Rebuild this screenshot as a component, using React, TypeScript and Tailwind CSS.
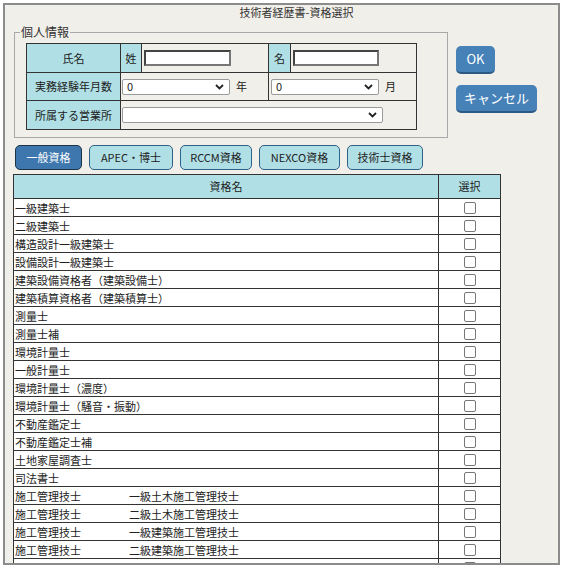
import React from "react";

const rows: [string, string?][] = [
  ["一級建築士"],
  ["二級建築士"],
  ["構造設計一級建築士"],
  ["設備設計一級建築士"],
  ["建築設備資格者（建築設備士）"],
  ["建築積算資格者（建築積算士）"],
  ["測量士"],
  ["測量士補"],
  ["環境計量士"],
  ["一般計量士"],
  ["環境計量士（濃度）"],
  ["環境計量士（騒音・振動）"],
  ["不動産鑑定士"],
  ["不動産鑑定士補"],
  ["土地家屋調査士"],
  ["司法書士"],
  ["施工管理技士", "一級土木施工管理技士"],
  ["施工管理技士", "二級土木施工管理技士"],
  ["施工管理技士", "一級建築施工管理技士"],
  ["施工管理技士", "二級建築施工管理技士"],
  ["施工管理技士", "一級造園施工管理技士"],
];

const tabs = [
  { label: "一般資格", w: "w-[67px]", active: true },
  { label: "APEC・博士", w: "w-[84px]" },
  { label: "RCCM資格", w: "w-[72px]" },
  { label: "NEXCO資格", w: "w-[81px]" },
  { label: "技術士資格", w: "w-[76px]" },
];

function Chevron() {
  return (
    <svg width="9" height="6" viewBox="0 0 9 6" className="shrink-0">
      <path d="M1 1 L4.5 4.5 L8 1" fill="none" stroke="#222" strokeWidth="1.8" />
    </svg>
  );
}

function FakeSelect({ value, w }: { value: string; w: string }) {
  return (
    <div className={`${w} h-[16px] bg-white border border-[#9a9a9a] rounded-[2px] flex items-center justify-between pl-[4px] pr-[5px] text-[11px] leading-none`}>
      <span>{value}</span>
      <Chevron />
    </div>
  );
}

function TextBox({ w }: { w: string }) {
  return <div className={`${w} h-[16px] bg-white border-2 border-[#444] border-b-[#777] border-r-[#777]`} />;
}

export default function App() {
  return (
    <div className="w-[562px] h-[568px] bg-white pt-[3px] pl-[3px] font-['Noto_Sans_CJK_JP',sans-serif] text-[#222]">
      <div className="w-[557px] h-[562px] border-2 border-[#8c8c8c] bg-[#f1efe9] overflow-hidden">
        {/* title */}
        <div className="h-[15px] text-[11px] leading-[15px] text-center pl-[30px] text-[#333]">技術者経歴書-資格選択</div>

        <div className="flex items-start mt-[4px]">
          <fieldset className="ml-[9px] w-[434px] border border-[#a8a8a8] pl-[11px] pt-[3px] pb-[7px]">
            <legend className="ml-[-6px] px-[1px] text-[12px] leading-[16px] text-[#333]">個人情報</legend>
            <table className="w-[391px] border-collapse border border-[#333] text-[11px]">
              <tbody>
                <tr className="h-[29px]">
                  <td className="w-[94px] border border-[#333] bg-[#b0e0e6] text-center">氏名</td>
                  <td className="w-[21px] border border-[#333] bg-[#b0e0e6] text-center">姓</td>
                  <td className="w-[127px] border border-[#333] pl-[2px]">
                    <TextBox w="w-[87px]" />
                  </td>
                  <td className="w-[22px] border border-[#333] bg-[#b0e0e6] text-center">名</td>
                  <td className="border border-[#333] pl-[2px]">
                    <TextBox w="w-[86px]" />
                  </td>
                </tr>
                <tr className="h-[28px]">
                  <td className="border border-[#333] bg-[#b0e0e6] text-center">実務経験年月数</td>
                  <td colSpan={2} className="border border-[#333] pl-[1px]">
                    <div className="flex items-center gap-[6px]">
                      <FakeSelect value="0" w="w-[108px]" />
                      <span>年</span>
                    </div>
                  </td>
                  <td colSpan={2} className="border border-[#333] pl-[2px]">
                    <div className="flex items-center gap-[6px]">
                      <FakeSelect value="0" w="w-[108px]" />
                      <span>月</span>
                    </div>
                  </td>
                </tr>
                <tr className="h-[29px]">
                  <td className="border border-[#333] bg-[#b0e0e6] text-center">所属する営業所</td>
                  <td colSpan={4} className="border border-[#333] pl-[1px]">
                    <FakeSelect value="" w="w-[261px]" />
                  </td>
                </tr>
              </tbody>
            </table>
          </fieldset>

          <div className="ml-[8px] mt-[22px] flex flex-col items-start gap-[11px]">
            <button className="w-[39px] h-[28px] rounded-[5px] bg-[#4682b8] border-b-2 border-[#2c5a84] text-white text-[13px]">OK</button>
            <button className="w-[81px] h-[28px] rounded-[5px] bg-[#4682b8] border-b-2 border-[#2c5a84] text-white text-[13px]">キャンセル</button>
          </div>
        </div>

        {/* tabs */}
        <div className="flex ml-[10px] mt-[7px] gap-[7px]">
          {tabs.map((t) => (
            <div
              key={t.label}
              className={`${t.w} h-[25px] rounded-[5px] border-[1.5px] flex items-center justify-center text-[11px] ${
                t.active ? "bg-[#3e77ad] border-[#1d3447] text-white" : "bg-[#b0e0e6] border-[#2f6287] text-[#222]"
              }`}
            >
              {t.label}
            </div>
          ))}
        </div>

        {/* list */}
        <table className="ml-[8px] mt-[4px] w-[488px] border-collapse border border-[#333] text-[11px]">
          <thead>
            <tr className="h-[24px] bg-[#b0e0e6]">
              <th className="border border-[#333] font-normal">資格名</th>
              <th className="w-[62px] border border-[#333] font-normal">選択</th>
            </tr>
          </thead>
          <tbody className="bg-white">
            {rows.map(([a, b], i) => (
              <tr key={i} className="h-[18px]">
                <td className="border border-[#333] pl-[1px] leading-[16px] whitespace-nowrap">
                  <span className="inline-block w-[114px]">{a}</span>
                  {b && <span>{b}</span>}
                </td>
                <td className="border border-[#333] text-center leading-none">
                  <span className="inline-block w-[12px] h-[12px] border border-[#777] rounded-[2px] bg-white align-middle" />
                </td>
              </tr>
            ))}
          </tbody>
        </table>
      </div>
    </div>
  );
}
